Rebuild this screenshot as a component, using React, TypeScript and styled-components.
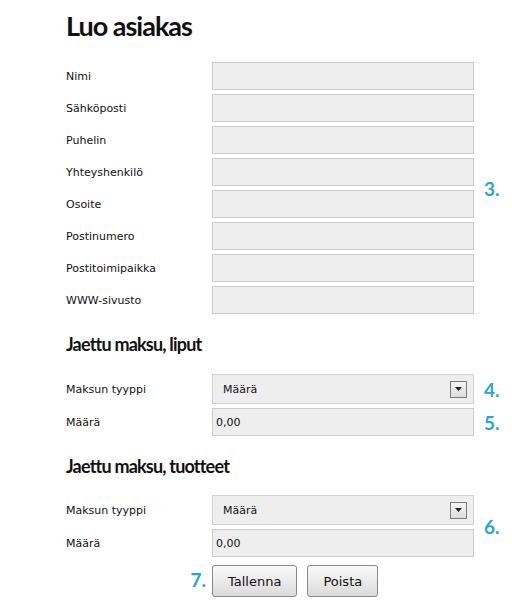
import React from "react";
import styled, { createGlobalStyle } from "styled-components";

const Global = createGlobalStyle`
  html, body { margin: 0; padding: 0; background: #ffffff; }
  body { font-family: "DejaVu Sans", Verdana, sans-serif; color: #111; }
  * { box-sizing: border-box; }
`;

const Page = styled.div`
  width: 516px;
  padding: 9px 0 0 66px;
`;

const Title = styled.h1`
  margin: 0 0 19px;
  font-family: Lato, "Liberation Sans", sans-serif;
  font-weight: 700;
  font-size: 27px;
  letter-spacing: -1px;
  line-height: 34px;
  color: #111;
`;

const SectionTitle = styled.h2<{ $after: number }>`
  margin: 18px 0 ${(p) => p.$after}px;
  font-family: Lato, "Liberation Sans", sans-serif;
  font-weight: 700;
  font-size: 18px;
  letter-spacing: -0.8px;
  line-height: 24px;
  color: #111;
`;

const FieldGrid = styled.div`
  display: grid;
  grid-template-columns: 146px 262px 42px;
  row-gap: 4px;
  align-items: center;
`;

const Label = styled.label`
  font-size: 11px;
  color: #111;
`;

const TextInput = styled.input`
  height: 28px;
  width: 262px;
  margin: 0;
  border: 1px solid #cbcbcb;
  background: #eeeeee;
  padding: 0 3px;
  font-family: "DejaVu Sans", Verdana, sans-serif;
  font-size: 11px;
  color: #111;
  outline: none;
`;

const SelectBox = styled.div`
  height: 30px;
  display: flex;
  align-items: center;
  justify-content: space-between;
  padding: 0 6px 0 10px;
  border: 1px solid #d2d2d2;
  background: #eeeeee;
  font-size: 11px;
  color: #111;
`;

const ArrowBox = styled.span`
  width: 17px;
  height: 17px;
  display: flex;
  align-items: center;
  justify-content: center;
  border: 1px solid #7a7a7a;
  background: linear-gradient(#f4f4f4, #dcdcdc);
`;

const Marker = styled.span<{ $rows?: number }>`
  grid-column: 3;
  grid-row: ${(p) => (p.$rows ? `span ${p.$rows}` : "auto")};
  align-self: center;
  padding-left: 10px;
  font-family: Lato, "Liberation Sans", sans-serif;
  font-weight: 700;
  font-size: 19px;
  color: #2aa5d6;
`;

const ActionMarker = styled(Marker)`
  grid-column: 1;
  justify-self: end;
  padding: 0 6px 0 0;
`;

const Actions = styled.div`
  display: flex;
  gap: 10px;
  padding-top: 4px;
`;

const Button = styled.button`
  height: 32px;
  padding: 0 15px;
  border: 1px solid #8a8a8a;
  border-radius: 3px;
  background: linear-gradient(#fbfbfb, #dadada);
  font-family: "DejaVu Sans", Verdana, sans-serif;
  font-size: 13px;
  color: #111;
`;

const customerFields = [
  "Nimi",
  "Sähköposti",
  "Puhelin",
  "Yhteyshenkilö",
  "Osoite",
  "Postinumero",
  "Postitoimipaikka",
  "WWW-sivusto",
];

const Arrow = () => (
  <ArrowBox>
    <svg width="7" height="4" viewBox="0 0 7 4">
      <path d="M0 0H7L3.5 4Z" fill="#222" />
    </svg>
  </ArrowBox>
);

export default function App() {
  return (
    <Page>
      <Global />
      <Title>Luo asiakas</Title>
      <FieldGrid>
        {customerFields.map((f, i) => (
          <React.Fragment key={f}>
            <Label>{f}</Label>
            <TextInput readOnly value="" />
            {i === 0 && <Marker $rows={8}>3.</Marker>}
          </React.Fragment>
        ))}
      </FieldGrid>

      <SectionTitle $after={18}>Jaettu maksu, liput</SectionTitle>
      <FieldGrid>
        <Label>Maksun tyyppi</Label>
        <SelectBox>
          <span>Määrä</span>
          <Arrow />
        </SelectBox>
        <Marker>4.</Marker>
        <Label>Määrä</Label>
        <TextInput readOnly value="0,00" />
        <Marker>5.</Marker>
      </FieldGrid>

      <SectionTitle $after={17}>Jaettu maksu, tuotteet</SectionTitle>
      <FieldGrid>
        <Label>Maksun tyyppi</Label>
        <SelectBox>
          <span>Määrä</span>
          <Arrow />
        </SelectBox>
        <Marker $rows={2}>6.</Marker>
        <Label>Määrä</Label>
        <TextInput readOnly value="0,00" />
        <ActionMarker>7.</ActionMarker>
        <Actions>
          <Button>Tallenna</Button>
          <Button>Poista</Button>
        </Actions>
      </FieldGrid>
    </Page>
  );
}
